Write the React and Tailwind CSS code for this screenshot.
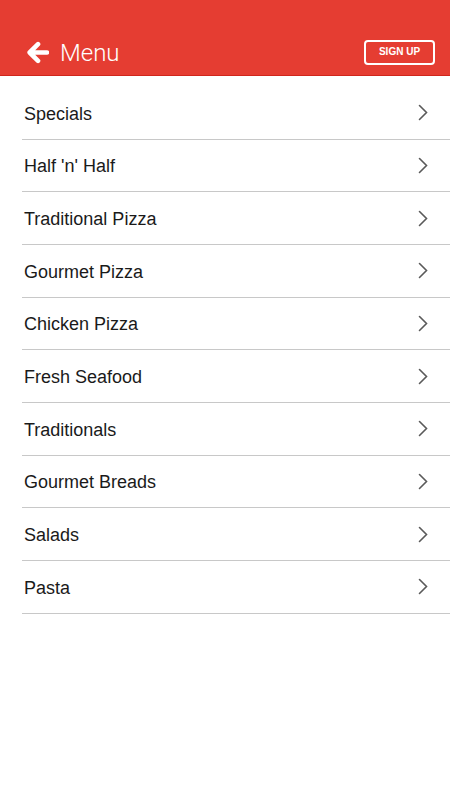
const items = [
  'Specials',
  "Half 'n' Half",
  'Traditional Pizza',
  'Gourmet Pizza',
  'Chicken Pizza',
  'Fresh Seafood',
  'Traditionals',
  'Gourmet Breads',
  'Salads',
  'Pasta',
]

function BackArrow() {
  return (
    <svg width="23" height="23" viewBox="0 0 22 22" fill="none">
      <path
        d="M11.5 3 L3.5 11 L11.5 19 M4 11 H20"
        stroke="white"
        strokeWidth="4.4"
        strokeLinecap="round"
        strokeLinejoin="round"
      />
    </svg>
  )
}

function Chevron() {
  return (
    <svg width="10" height="17" viewBox="0 0 10 17" fill="none">
      <path d="M1.5 1.5 L8.5 8.5 L1.5 15.5" stroke="#5a5a5a" strokeWidth="1.6" strokeLinecap="round" />
    </svg>
  )
}

export default function App() {
  return (
    <div className="min-h-[800px] w-[450px] bg-white font-['Liberation_Sans',Arial,sans-serif]">
      {/* Header */}
      <div className="h-[76px] bg-[#e53d32] border-b border-[#d0261c] flex items-end pb-[10px]">
        <div className="flex items-center w-full pl-[26px] pr-[15px]">
          <BackArrow />
          <span className="ml-[11px] pt-[2px] text-white text-[24px] font-light font-['Roboto',sans-serif] leading-none">Menu</span>
          <button className="ml-auto h-[25px] w-[71px] border-2 border-white rounded-[4px] text-white text-[10px] font-bold leading-none">
            SIGN UP
          </button>
        </div>
      </div>

      {/* Liste */}
      <div className="pt-[11px] pl-[22px]">
        {items.map(item => (
          <div
            key={item}
            className="h-[52.67px] border-b border-[#c8c8c8] flex items-center pl-[2px] pr-[22px]"
          >
            <span className="pt-[2px] text-[18px] text-[#1a1a1a] leading-none">{item}</span>
            <span className="ml-auto flex"><Chevron /></span>
          </div>
        ))}
      </div>
    </div>
  )
}
